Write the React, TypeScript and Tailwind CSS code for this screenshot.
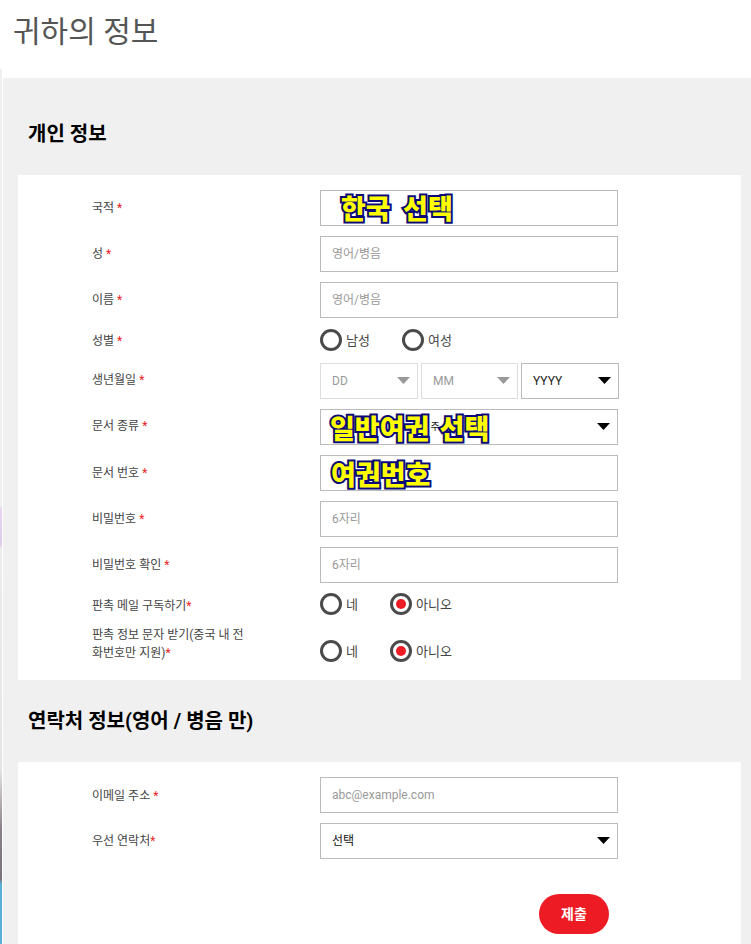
import React from "react";

const font = { fontFamily: "Roboto, 'Noto Sans CJK KR', sans-serif" };

function Star({ spaced = true }: { spaced?: boolean }) {
  return <span className={spaced ? "ml-[3px] text-[#ed1c24]" : "text-[#ed1c24]"}>*</span>;
}

function Label({ children, className = "" }: { children: React.ReactNode; className?: string }) {
  return <div className={`w-[228px] pr-[68px] text-xs leading-[18px] text-[#444] ${className}`}>{children}</div>;
}

function Row({
  label,
  className = "h-9",
  labelClass = "",
  children,
}: {
  label: React.ReactNode;
  className?: string;
  labelClass?: string;
  children: React.ReactNode;
}) {
  return (
    <div className={`flex items-center ${className}`}>
      <Label className={labelClass}>{label}</Label>
      {children}
    </div>
  );
}

function Caret({ light = false }: { light?: boolean }) {
  return (
    <svg width="13" height="7" viewBox="0 0 13 7" className="absolute right-[7px] top-[13px]">
      <path d="M0 0H13L6.5 7Z" fill={light ? "#999" : "#000"} />
    </svg>
  );
}

function Box({ children, width = "w-[298px]", className = "border-[#bbb]" }: { children?: React.ReactNode; width?: string; className?: string }) {
  return (
    <div className={`relative flex h-9 items-center border pl-[11px] text-xs ${width} ${className}`}>{children}</div>
  );
}

function Radio({ checked = false, label, width }: { checked?: boolean; label: string; width: string }) {
  return (
    <div className={`flex items-center text-[13px] text-[#444] ${width}`}>
      <span className="mr-[4px] flex h-[22px] w-[22px] items-center justify-center rounded-full border-[3px] border-[#4a4a4a]">
        {checked && <span className="h-[10px] w-[10px] rounded-full bg-[#ed1c24]" />}
      </span>
      <span className="translate-y-[1px]">{label}</span>
    </div>
  );
}

const overlay =
  "text-[27px] leading-none font-black text-[#ffff00] [-webkit-text-stroke:4px_#0a0a78] [paint-order:stroke_fill] [font-family:'Noto_Sans_CJK_KR',sans-serif]";

export default function App() {
  return (
    <div style={font} className="relative min-h-[944px] overflow-hidden bg-white">
      <div className="absolute bottom-0 left-0 top-[69px] w-[2px] bg-[linear-gradient(to_bottom,#efefef_0,#efefef_436px,#e6d4f0_440px,#e0cce8_475px,#ececec_480px,#e4e4e4_700px,#8c8088_760px,#7c7078_810px,#58b0d8_815px,#58b0d8_100%)]" />
      <div className="h-[78px] pl-[13px] pt-[10px] text-[30px] leading-[44px] text-[#555]">귀하의 정보</div>
      <div className="ml-[3px] bg-[#f0f0f0] pl-[15px] pr-[10px]">
        <h2 className="flex h-[97px] items-center pl-[10px] pt-[15px] text-[20px] font-bold text-black">개인 정보</h2>
        <div className="flex h-[505px] flex-col gap-[10px] bg-white pl-[74px] pt-[15px]">
          <Row label={<>국적<Star /></>}>
            <Box>
              <span className={`${overlay} -mt-[2px] pl-[9px]`}>한국 &nbsp;선택</span>
            </Box>
          </Row>
          <Row label={<>성<Star /></>}><Box><span className="text-[#999]">영어/병음</span></Box></Row>
          <Row label={<>이름<Star /></>}><Box><span className="text-[#999]">영어/병음</span></Box></Row>
          <Row label={<>성별<Star /></>} className="h-[25px]">
            <div className="-mt-[2px] flex">
              <Radio label="남성" width="w-[82px]" />
              <Radio label="여성" width="w-[80px]" />
            </div>
          </Row>
          <Row label={<>생년월일<Star /></>} labelClass="pb-[2px]">
            <div className="flex gap-[3px]">
              <Box width="w-[98px]" className="border-[#ddd]"><span className="text-[#999]">DD</span><Caret light /></Box>
              <Box width="w-[97px]" className="border-[#ddd]"><span className="text-[#999]">MM</span><Caret light /></Box>
              <Box width="w-[98px]"><span className="text-[#222]">YYYY</span><Caret /></Box>
            </div>
          </Row>
          <Row label={<>문서 종류<Star /></>} labelClass="pb-[2px]">
            <Box>
              <div className="flex items-center">
                <span className={`${overlay} -ml-[2px]`}>일반여권</span>
                <span className="ml-[1px] text-[10px] text-[#222]">주</span>
                <span className={overlay}>선택</span>
              </div>
              <Caret />
            </Box>
          </Row>
          <Row label={<>문서 번호<Star /></>}>
            <Box><span className={`${overlay} -ml-[1px]`}>여권번호</span></Box>
          </Row>
          <Row label={<>비밀번호<Star /></>}><Box><span className="text-[#999]">6자리</span></Box></Row>
          <Row label={<>비밀번호 확인<Star /></>}><Box><span className="text-[#999]">6자리</span></Box></Row>
          <Row label={<>판촉 메일 구독하기<Star spaced={false} /></>} className="h-[22px]" labelClass="pt-[4px]">
            <div className="flex">
              <Radio label="네" width="w-[70px]" />
              <Radio checked label="아니오" width="w-[80px]" />
            </div>
          </Row>
          <div className="flex h-[36px] items-center">
            <Label className="pt-[1px]">판촉 정보 문자 받기(중국 내 전화번호만 지원)<Star spaced={false} /></Label>
            <div className="flex pt-[15px]">
              <Radio label="네" width="w-[70px]" />
              <Radio checked label="아니오" width="w-[80px]" />
            </div>
          </div>
        </div>
        <h2 className="flex h-[82px] items-center pl-[10px] text-[20px] font-bold text-black">연락처 정보(영어 / 병음 만)</h2>
        <div className="flex h-[182px] flex-col bg-white pl-[74px] pt-[15px]">
          <div className="flex flex-col gap-[10px]">
            <Row label={<>이메일 주소<Star /></>} labelClass="pt-[2px]"><Box><span className="text-[#999]">abc@example.com</span></Box></Row>
            <Row label={<>우선 연락처<Star spaced={false} /></>}>
              <Box><span className="text-[#111]">선택</span><Caret /></Box>
            </Row>
          </div>
          <div className="mt-[35px] flex w-[517px] justify-end">
            <button className="h-10 w-[70px] rounded-[20px] bg-[#ed1c24] text-sm font-bold text-white">제출</button>
          </div>
        </div>
      </div>
    </div>
  );
}
